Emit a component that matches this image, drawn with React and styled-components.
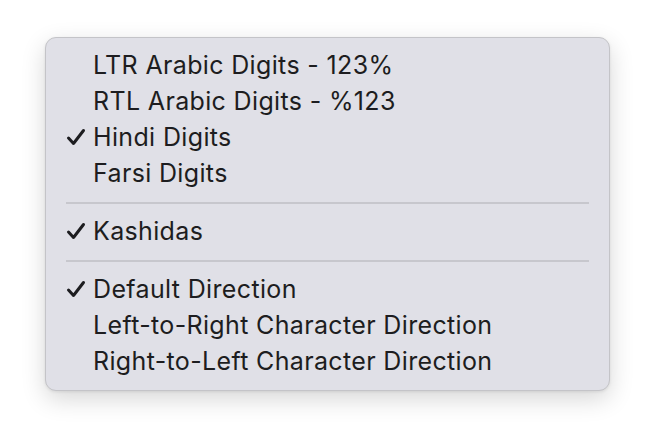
import React from "react";
import styled, { createGlobalStyle } from "styled-components";

const Global = createGlobalStyle`
  html, body {
    margin: 0;
    background: #ffffff;
  }
  body {
    font-family: Inter, "Noto Sans", sans-serif;
    -webkit-font-smoothing: antialiased;
  }
`;

const Page = styled.div`
  width: 656px;
  height: 444px;
  padding: 37px 0 0 45px;
  box-sizing: border-box;
`;

const Menu = styled.div`
  width: 565px;
  box-sizing: border-box;
  padding: 10px 20px 10px 20px;
  background: #e0e0e7;
  border-radius: 11px;
  border: 1px solid #c4c4c8;
  box-shadow: 0 8px 24px rgba(0, 0, 0, 0.16), 0 1px 3px rgba(0, 0, 0, 0.08);
`;

const Item = styled.div`
  display: flex;
  align-items: center;
  height: 36px;
  box-sizing: border-box;
  padding-bottom: 2px;
  font-size: 25px;
  color: #1d1d20;
  letter-spacing: 0.35px;
  white-space: nowrap;
`;

const Check = styled.span`
  width: 27px;
  display: flex;
  align-items: center;
  visibility: ${(p) => (p.on ? "visible" : "hidden")};
`;

const Separator = styled.div`
  height: 2px;
  margin: 10px 0;
  background: #c7c7cd;
`;

const CheckMark = () => (
  <svg width="20" height="20" viewBox="0 0 20 20">
    <path
      d="M2.5 11 L7.5 16.5 L17.5 3.5"
      fill="none"
      stroke="#1d1d20"
      strokeWidth="3"
      strokeLinecap="round"
      strokeLinejoin="round"
    />
  </svg>
);

const groups = [
  [
    { label: "LTR Arabic Digits - 123%" },
    { label: "RTL Arabic Digits - %123" },
    { label: "Hindi Digits", checked: true },
    { label: "Farsi Digits" },
  ],
  [{ label: "Kashidas", checked: true }],
  [
    { label: "Default Direction", checked: true },
    { label: "Left-to-Right Character Direction" },
    { label: "Right-to-Left Character Direction" },
  ],
];

export default function App() {
  return (
    <Page>
      <Global />
      <Menu>
        {groups.map((group, gi) => (
          <React.Fragment key={gi}>
            {gi > 0 && <Separator />}
            {group.map((item) => (
              <Item key={item.label}>
                <Check on={item.checked}>
                  <CheckMark />
                </Check>
                {item.label}
              </Item>
            ))}
          </React.Fragment>
        ))}
      </Menu>
    </Page>
  );
}
